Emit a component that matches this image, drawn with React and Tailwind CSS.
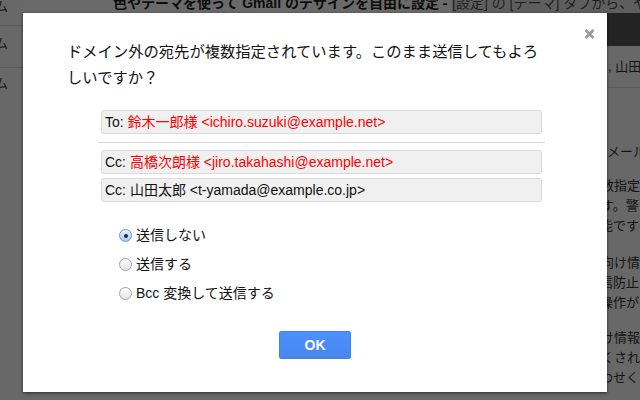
import React from "react";

function Radio({ checked }) {
  return checked ? (
    <span className="flex h-[13px] w-[13px] flex-none items-center justify-center rounded-full border border-[#6f93c4] bg-linear-to-b from-[#e4effc] to-[#a9cbf3] shadow-[inset_0_1px_1px_rgba(255,255,255,0.8)]">
      <span className="h-[4px] w-[4px] rounded-full bg-[#1b2a3a]" />
    </span>
  ) : (
    <span className="h-[13px] w-[13px] flex-none rounded-full border border-[#a3a3a3] bg-linear-to-b from-white to-[#e3e3e3]" />
  );
}

function Recipient({ label, name, addr, red }) {
  return (
    <div className="h-[24px] rounded-[3px] border border-[#dadada] bg-[#f0f0f0] pl-[3px] text-[14px] leading-[22px] whitespace-nowrap text-[#111]">
      {label}{" "}
      <span className={red ? "text-[#ff0000]" : ""}>
        {name} {addr}
      </span>
    </div>
  );
}

export default function App() {
  const font = "font-['Liberation_Sans','Noto_Sans_CJK_JP',sans-serif]";
  return (
    <div className={`relative h-[400px] w-[640px] overflow-hidden bg-[#686868] ${font}`}>
      {/* dimmed page underneath */}
      <div className="flex h-full w-full">
        <div className="flex w-[23px] flex-none flex-col overflow-hidden text-[13px] text-[#111]">
          <div className="h-[26px] border-b border-[#5b5b5b] pt-0 leading-[13px]">
            <span className="-ml-[5px]">ム</span>
          </div>
          <div className="h-[42px] border-b border-[#5b5b5b] pt-[11px] leading-[13px]">
            <span className="-ml-[5px]">ム</span>
          </div>
          <div className="h-[42px] pt-[9px] leading-[13px]">
            <span className="-ml-[5px]">ム</span>
          </div>
        </div>
        <div className="flex min-w-0 flex-1 flex-col">
          <div className="flex h-[13px] flex-none overflow-hidden whitespace-nowrap text-[14px] leading-[14px]">
            <div className="w-[429px] flex-none bg-[#6a6a6a] pl-[90px]">
              <span className="-mt-[4px] block font-bold text-[#0d0d0d]">
                色やテーマを使って Gmail のデザインを自由に設定 -
              </span>
            </div>
            <div className="flex-1 overflow-hidden bg-[#5e5e5e]">
              <span className="-mt-[4px] block text-[#1e1e1e]">[設定] の [テーマ] タブから、や</span>
            </div>
          </div>
          <div className="flex flex-1">
            <div className="flex-1" />
            <div className="flex w-[46px] flex-none flex-col overflow-hidden whitespace-nowrap text-[13px] leading-[20px] text-[#141414]">
              <div className="h-[33px] bg-[#232323]" />
              <div className="flex h-[42px] items-center border-b border-[#5a5a5a] pl-[14px]">, 山田</div>
              <div className="mt-[54px] pl-[13px]">メール</div>
              <div className="mt-[14px] pl-[7px]">数指定</div>
              <div className="pl-[7px]">す。警</div>
              <div className="pl-[6px]">能です</div>
              <div className="mt-[17px] pl-[7px]">向け情</div>
              <div className="pl-[6px]">信防止</div>
              <div className="pl-[6px]">操作が</div>
              <div className="mt-[15px] pl-[7px]">け情報</div>
              <div className="pl-[7px]">くされ</div>
              <div className="pl-[6px]">わせく</div>
            </div>
          </div>
        </div>
      </div>

      {/* dialog */}
      <div className="absolute left-[23px] top-[13px] flex h-[379px] w-[584px] flex-col bg-white pt-[16px] shadow-[0_1px_3px_rgba(0,0,0,0.6)]">
        <div className="flex justify-end pr-[12px]">
          <svg width="11" height="10" viewBox="0 0 11 10">
            <path d="M1.5 1 L9.5 9 M9.5 1 L1.5 9" stroke="#9a9a9a" strokeWidth="2.6" />
          </svg>
        </div>
        <div className="ml-[44px] text-[15.3px] leading-[26px] whitespace-nowrap text-[#111]">
          ドメイン外の宛先が複数指定されています。このまま送信してもよろ
          <br />
          しいですか？
        </div>
        <div className="ml-[78px] mt-[19px] flex w-[441px] flex-col">
          <Recipient label="To:" name="鈴木一郎様" addr="<ichiro.suzuki@example.net>" red />
          <div className="-mx-[3px] mt-[8px] h-px bg-[#d4d4d4]" />
          <div className="mt-[7px] flex flex-col gap-[4px]">
            <Recipient label="Cc:" name="高橋次朗様" addr="<jiro.takahashi@example.net>" red />
            <Recipient label="Cc:" name="山田太郎" addr="<t-yamada@example.co.jp>" />
          </div>
        </div>
        <div className="ml-[96px] mt-[19px] flex flex-col text-[14px] text-[#111]">
          {[
            ["送信しない", true],
            ["送信する", false],
            ["Bcc 変換して送信する", false],
          ].map(([t, c]) => (
            <div key={t} className="flex h-[29px] items-center gap-[4px]">
              <Radio checked={c} />
              <span>{t}</span>
            </div>
          ))}
        </div>
        <div className="ml-[256px] mt-[23px] flex h-[28px] w-[72px] items-center justify-center rounded-[2px] border border-[#3d82f0] bg-linear-to-b from-[#4d90fe] to-[#4787ed] text-[14px] font-bold text-white">
          OK
        </div>
      </div>
    </div>
  );
}
